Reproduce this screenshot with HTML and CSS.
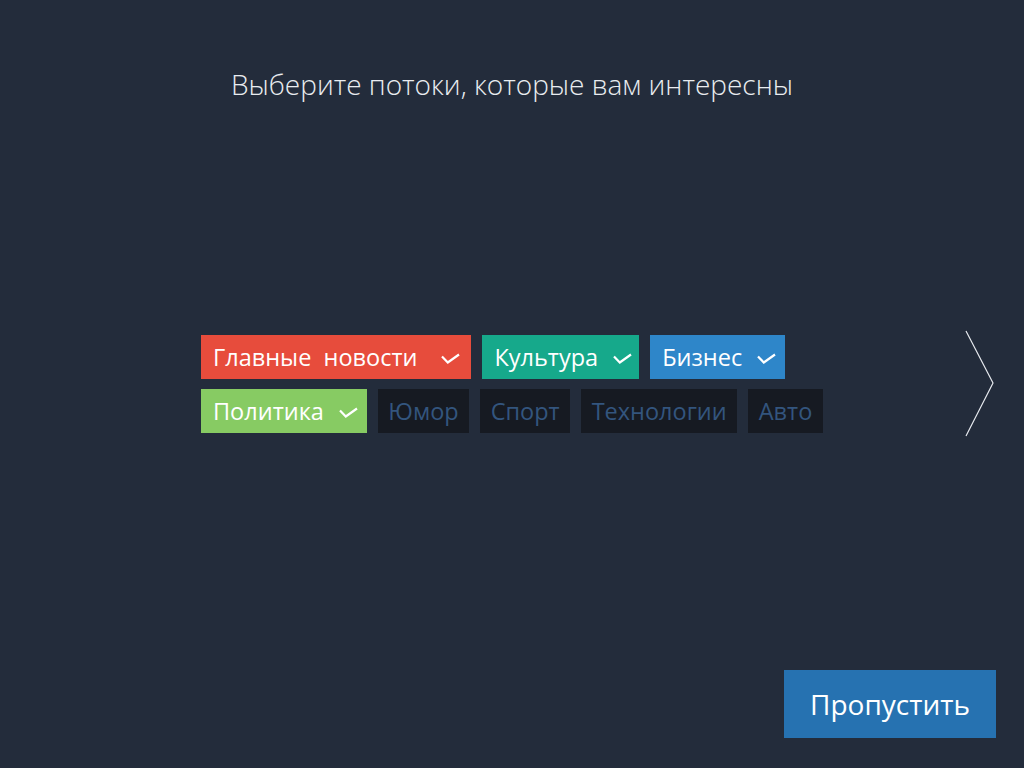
FILE: index.html
```html
<!DOCTYPE html>
<html lang="ru">
<head>
  <meta charset="UTF-8">
  <title>Выбор потоков</title>
  <link rel="stylesheet" href="styles.css">
</head>
<body>
  <div class="screen">
    <h1 class="title">Выберите потоки, которые вам интересны</h1>

    <div class="streams">
      <div class="stream-row">
        <div class="tag tag-red"><span>Главные&nbsp; новости</span><svg class="check" viewBox="0 0 19 11"><polyline points="1,3.5 6.8,9.5 18,1.5"/></svg></div>
        <div class="tag tag-teal"><span>Культура</span><svg class="check" viewBox="0 0 19 11"><polyline points="1,3.5 6.8,9.5 18,1.5"/></svg></div>
        <div class="tag tag-blue"><span>Бизнес</span><svg class="check" viewBox="0 0 19 11"><polyline points="1,3.5 6.8,9.5 18,1.5"/></svg></div>
      </div>
      <div class="stream-row">
        <div class="tag tag-green"><span>Политика</span><svg class="check" viewBox="0 0 19 11"><polyline points="1,3.5 6.8,9.5 18,1.5"/></svg></div>
        <div class="tag tag-off">Юмор</div>
        <div class="tag tag-off">Спорт</div>
        <div class="tag tag-off">Технологии</div>
        <div class="tag tag-off">Авто</div>
      </div>
    </div>

    <svg class="next-arrow" viewBox="0 0 30 108"><polyline points="1,1 28,53 1,106"/></svg>

    <div class="footer">
      <button class="btn-skip">Пропустить</button>
    </div>
  </div>
</body>
</html>
```

FILE: styles.css
```css
* {
  margin: 0;
  padding: 0;
  box-sizing: border-box;
}

body {
  background-color: #232c3b;
  color: #ffffff;
  font-family: 'Open Sans', 'Noto Sans', sans-serif;
}

.screen {
  position: relative;
  width: 1024px;
  height: 768px;
}

/* Title */
.title {
  padding-top: 64px;
  text-align: center;
  font-size: 28px;
  font-weight: 300;
  line-height: 40px;
  color: #e9ecf0;
}

/* Tags */
.streams {
  display: flex;
  flex-direction: column;
  gap: 10px;
  margin-top: 231px;
  padding-left: 201px;
}

.stream-row {
  display: flex;
  gap: 11px;
}

.tag {
  display: flex;
  align-items: center;
  height: 44px;
  padding: 0 9px 0 12px;
  font-size: 23.5px;
  line-height: 44px;
  color: #ffffff;
  white-space: nowrap;
}

.tag .check {
  display: block;
  flex-shrink: 0;
  width: 19px;
  height: 11px;
  margin-left: 15px;
  margin-top: 2px;
  fill: none;
  stroke: #ffffff;
  stroke-width: 2.2;
}

.tag-red { background-color: #e74c3c; padding-right: 11px; }
.tag-red .check { margin-left: 24px; }
.tag-teal { background-color: #16a98b; padding-right: 7px; }
.tag-blue { background-color: #2e86c9; }
.tag-green { background-color: #87cb63; }

.tag-off {
  background-color: #161a22;
  color: #33557e;
  padding: 0 10.5px;
}

/* Arrow */
.next-arrow {
  position: absolute;
  left: 965px;
  top: 330px;
  width: 30px;
  height: 108px;
  fill: none;
  stroke: #e6e9ee;
  stroke-width: 1.2;
}

/* Footer */
.footer {
  position: absolute;
  right: 28px;
  bottom: 30px;
}

.btn-skip {
  width: 212px;
  height: 68px;
  border: none;
  background-color: #2672b1;
  color: #ffffff;
  font-family: 'Open Sans', 'Noto Sans', sans-serif;
  font-size: 28px;
  cursor: pointer;
}
```
